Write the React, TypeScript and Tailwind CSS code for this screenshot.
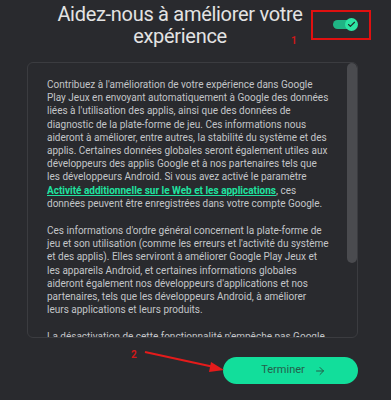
import { ArrowRight, Check } from "lucide-react"

const p1 = [
  "Contribuez à l'amélioration de votre expérience dans Google",
  "Play Jeux en envoyant automatiquement à Google des données",
  "liées à l'utilisation des applis, ainsi que des données de",
  "diagnostic de la plate-forme de jeu. Ces informations nous",
  "aideront à améliorer, entre autres, la stabilité du système et des",
  "applis. Certaines données globales seront également utiles aux",
  "développeurs des applis Google et à nos partenaires tels que",
  "les développeurs Android. Si vous avez activé le paramètre",
]

const p2 = [
  "Ces informations d'ordre général concernent la plate-forme de",
  "jeu et son utilisation (comme les erreurs et l'activité du système",
  "et des applis). Elles serviront à améliorer Google Play Jeux et",
  "les appareils Android, et certaines informations globales",
  "aideront également nos développeurs d'applications et nos",
  "partenaires, tels que les développeurs Android, à améliorer",
  "leurs applications et leurs produits.",
]

const Lines = ({ lines }: { lines: string[] }) => (
  <>
    {lines.map((l) => (
      <span key={l} className="block whitespace-nowrap">
        {l}
      </span>
    ))}
  </>
)

const App = () => {
  return (
    <div
      className="relative w-[391px] h-[400px] overflow-hidden bg-[#292a2e]"
      style={{ fontFamily: "Roboto, 'Noto Sans', sans-serif" }}>
      {/* header */}
      <div className="h-[62px] pt-[3px]">
        <h1 className="w-[360px] text-center text-[20px] leading-[22px] tracking-[-0.3px] text-[#e3e3e3]">
          Aidez-nous à améliorer votre
          <br />
          expérience
        </h1>
      </div>

      {/* annotation 1 + toggle */}
      <div className="absolute left-[311px] top-[10px] w-[60px] h-[30px] border-2 border-[#e01010]">
        <div className="absolute left-[20px] top-[8px] w-[19px] h-[9px] rounded-full bg-[#1fb484]" />
        <div className="absolute left-[32px] top-[6px] w-[13px] h-[13px] rounded-full bg-[#2de4a3] flex items-center justify-center">
          <Check size={9} strokeWidth={3} color="#1d2a25" />
        </div>
      </div>
      <span className="absolute left-[291px] top-[33px] text-[10px] font-bold text-[#d01818]">1</span>

      {/* panel */}
      <div className="relative mx-[27px] w-[331px] h-[276px] overflow-hidden rounded-[6px] border border-[#3b3c40]">
        <div className="pl-[19px] pt-[15px] text-[10px] leading-[13.2px] text-[#c3c5c8]">
          <p>
            <Lines lines={p1} />
            <span className="block whitespace-nowrap">
              <a className="font-bold text-[#1fe3a0] underline">
                Activité additionnelle sur le Web et les applications
              </a>
              , ces
            </span>
            <span className="block whitespace-nowrap">
              données peuvent être enregistrées dans votre compte Google.
            </span>
          </p>
          <p className="mt-[14px]">
            <Lines lines={p2} />
          </p>
          <p className="mt-[14px] whitespace-nowrap">
            La désactivation de cette fonctionnalité n'empêche pas Google
          </p>
        </div>
        <div className="absolute right-0 top-0 w-[10px] h-[200px] rounded-full bg-[#4a4b4f]" />
      </div>

      {/* footer */}
      <div className="flex justify-end pr-[33px] mt-[19px]">
        <button className="flex items-center justify-center gap-[9px] w-[135px] h-[27px] pl-[6px] rounded-full bg-[#12de9b] text-[11px] text-[#245f4b]">
          Terminer
          <ArrowRight size={12} strokeWidth={2} />
        </button>
      </div>

      {/* annotation 2 */}
      <span className="absolute left-[131px] top-[347px] text-[10px] font-bold text-[#d01818]">2</span>
      <svg className="absolute left-0 top-0" width="391" height="400" viewBox="0 0 391 400">
        <line x1="145" y1="352" x2="214" y2="367" stroke="#e41b1b" strokeWidth="2" />
        <polygon points="224,370 211,362 209,372" fill="#e41b1b" />
      </svg>
    </div>
  )
}

export default App
